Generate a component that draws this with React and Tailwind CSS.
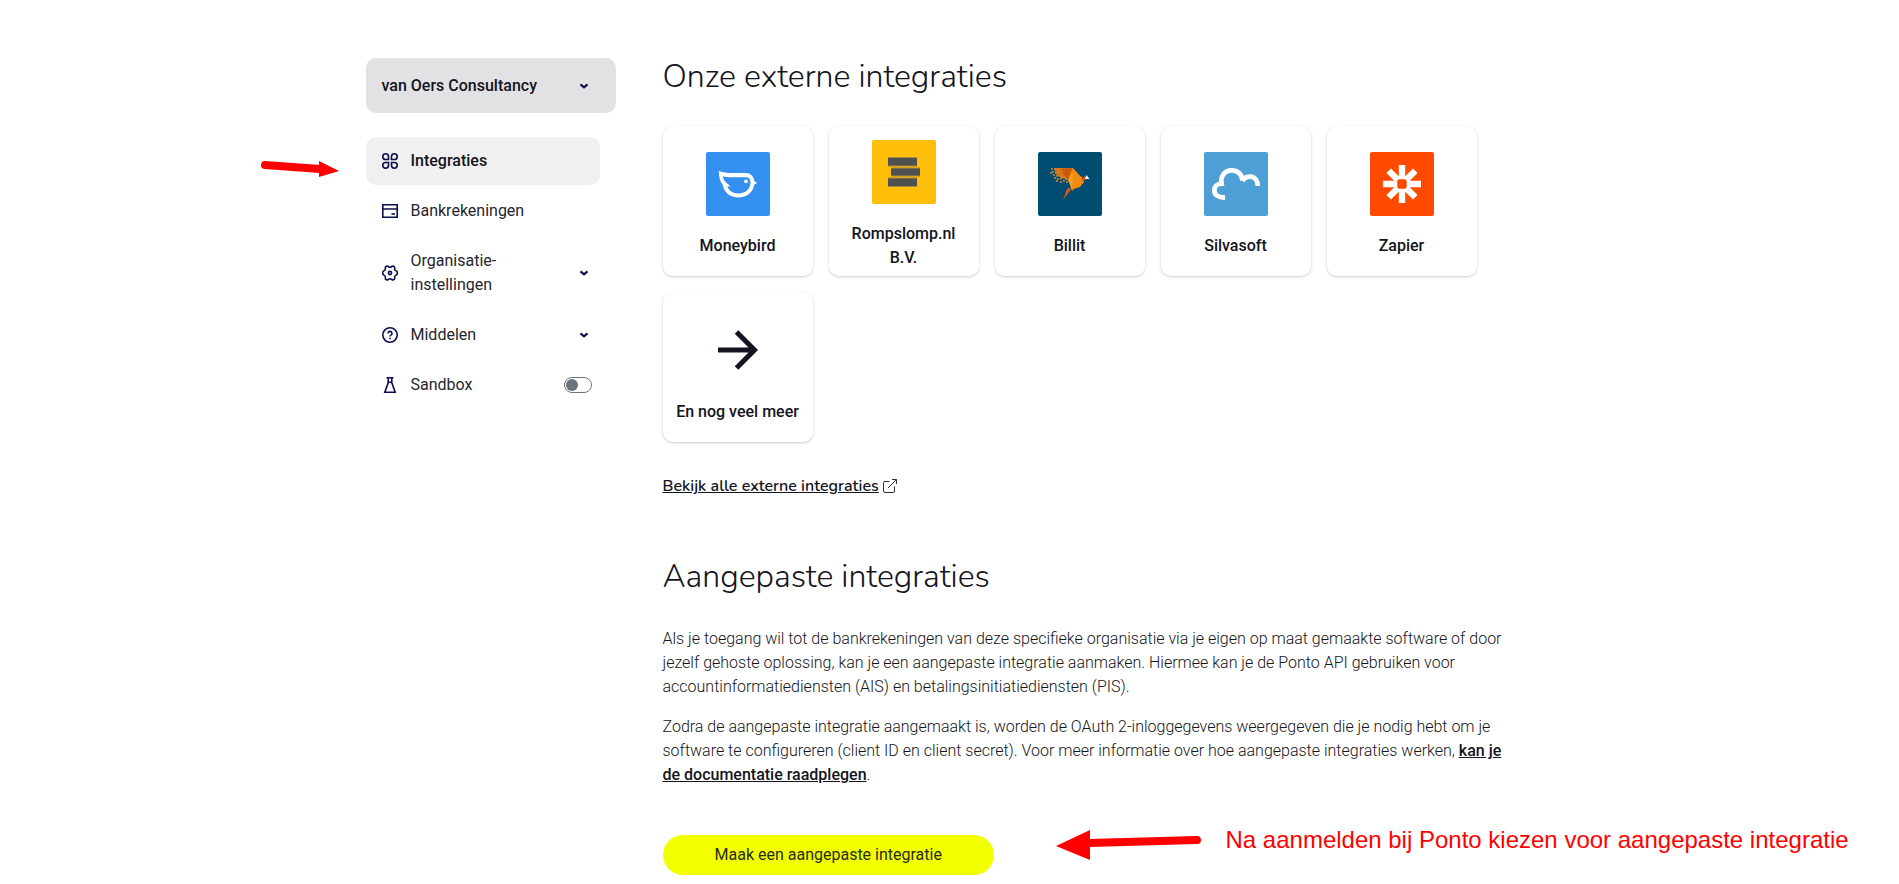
function Icon({ children, className = "size-4 shrink-0" }) {
  return (
    <svg viewBox="0 0 16 16" className={className} fill="none" stroke="#0b0f4c" strokeWidth="1.6" aria-hidden="true">
      {children}
    </svg>
  );
}

function Chevron() {
  return (
    <Icon className="mr-2 size-4 shrink-0">
      <path d="M4.500 6.400 8 9.400l3.500-3" strokeWidth="2.200" />
    </Icon>
  );
}

function IntegrationsIcon() {
  return (
    <Icon>
      <path d="M6.500 6.500H3.650A2.850 2.850 0 1 1 6.500 3.650ZM9.500 6.500V3.650A2.850 2.850 0 1 1 12.350 6.500ZM6.500 9.500V12.350A2.850 2.850 0 1 1 3.650 9.500ZM9.500 9.500H12.350A2.850 2.850 0 1 1 9.500 12.350Z" />
    </Icon>
  );
}

function AccountsIcon() {
  return (
    <Icon>
      <path d="M.8 1.800h14.400v12.400H.8ZM.8 6h14.400" />
      <path d="M9.500 11H13" />
    </Icon>
  );
}

function GearIcon() {
  return (
    <Icon>
      <path
        strokeLinejoin="round"
        d="M5 1C6 1 6.500 2.200 8 2.200S10 1 11 1l1.500.9c.5 1-.3 1.800.4 3 .6 1.100 1.800.9 2.300 1.900v2.400c-.5 1-1.700.8-2.300 1.900-.7 1.200.1 2-.4 3L11 15c-1 0-1.500-1.200-3-1.200S6 15 5 15l-1.500-.9c-.5-1 .3-1.800-.4-3C2.500 10 1.300 10.200.8 9.200V6.800c.5-1 1.700-.8 2.300-1.900.7-1.200-.1-2 .4-3Z"
      />
      <circle cx="8" cy="8" r="1.600" />
    </Icon>
  );
}

function HelpIcon() {
  return (
    <Icon>
      <circle cx="8" cy="8" r="7.200" />
      <path d="M6 6.400a2 2 0 1 1 3 1.700c-.7.400-1 .7-1 1.400M8 10.700v1.500" />
    </Icon>
  );
}

function FlaskIcon() {
  return (
    <Icon>
      <path d="M4.500.8h7M6.200 1v4.800L2.800 15.200h10.400L9.800 5.800V1M6.200 5.200h3.600" />
    </Icon>
  );
}

function MoneybirdLogo() {
  return (
    <svg viewBox="0 0 64 64" className="size-16 rounded-xs bg-[#338ff0]" aria-hidden="true">
      <path
        fillRule="evenodd"
        fill="#fff"
        d="M12.800 18.800C17 20.800 21 21 26 21H40c4.500 0 7.600 3 8.300 8L51.200 31l-3 1.800C47.300 40 41 45.600 32.500 45.600c-8.500 0-14.800-5.500-15.800-12.800C14 29.500 12.800 25 12.800 18.800ZM16.800 24.200c.3 2.600 1.300 4.400 3 6l4.900 4.200-3.300-.2C22.500 38.400 26.700 41.400 32.500 41.400 39.200 41.400 44.500 37 44.500 30.500 44.500 27 42.800 25.200 39.600 25.200H26c-3.500 0-6.400-.2-9.200-1Z"
      />
      <circle cx="40" cy="29.300" r="1.900" fill="#fff" />
    </svg>
  );
}

function RompslompLogo() {
  return (
    <svg viewBox="0 0 64 64" className="size-16 rounded-xs bg-[#ffbe0a]" aria-hidden="true">
      <path fill="#a5883a" d="M16 17h29v9.500H16zM19 27.500h29v9H19zM16 37.500h29V47H16z" />
      <path fill="#505052" d="M16 18h29v7.500H16zM19 28.500h29v7H19zM16 38.500h29V46H16z" />
    </svg>
  );
}

const pixels = [
  [13, 16], [16, 16], [19, 17], [14, 19], [17, 20], [20, 20], [12, 20], [15, 22], [18, 23],
  [21, 23], [16, 25], [19, 26], [22, 26], [24, 24], [25, 28], [22, 29], [18, 28], [28, 29], [27, 26], [23, 18],
];

function BillitLogo() {
  return (
    <svg viewBox="0 0 64 64" className="size-16 rounded-xs bg-[#004d73]" aria-hidden="true">
      <path fill="#e0730f" d="M16 16h19l3 6-5 8-5-3-5-1-5-4Z" />
      <path fill="#c95a0c" d="m23 17 11-1-4 11-4-4Z" />
      <path fill="#f08c12" d="m35 16 9 10-10 13-2-10Z" />
      <path fill="#f9a01b" d="m35 18-1 20-4-10Z" />
      <path fill="#f28a10" d="m43 24 3 6-4 5-9 3 4-6Z" />
      <path fill="#d9580f" d="m43 27 4-3 2 3-4 2ZM33 35l-1 4-7 9 4-11Z" />
      <path fill="#fff" d="m47 27 1.500-4 3 4Z" />
      {pixels.map(([x, y]) => (
        <rect key={x + "-" + y} x={x} y={y} width="1.800" height="1.800" fill="#c98434" />
      ))}
    </svg>
  );
}

function SilvasoftLogo() {
  return (
    <svg viewBox="0 0 64 64" className="size-16 rounded-xs bg-[#4f9fd7]" aria-hidden="true">
      <path
        fill="none"
        stroke="#fff"
        strokeWidth="4.800"
        d="M21 45.500C14 45.800 10.300 42.600 10.300 38.500c0-4 3-6.800 7.200-6.800C16.200 24.500 20.500 18.300 27.500 18.300c6 0 10 3.700 11.300 10.200M38.500 29c2-3.300 4.800-4.500 8-4.300 4.400.3 7.200 3.800 7.300 9.300"
      />
    </svg>
  );
}

function ZapierLogo() {
  return (
    <svg viewBox="0 0 64 64" className="size-16 rounded-xs bg-[#ff4a00]" aria-hidden="true">
      <path stroke="#fff" strokeWidth="6.400" d="M32 13v38M13 32h38M18.700 18.700l26.600 26.600M45.300 18.700 18.700 45.300" />
      <rect x="27.300" y="27.300" width="9.400" height="9.400" rx="2" fill="#ff4a00" />
    </svg>
  );
}

function ArrowLogo() {
  return (
    <svg viewBox="0 0 64 64" className="size-16" fill="none" stroke="#141420" strokeWidth="5" aria-hidden="true">
      <path d="M12 32h36M30.500 14 48.500 32l-18 18" />
    </svg>
  );
}

const integrations = [
  { name: "Moneybird", Logo: MoneybirdLogo },
  { name: "Rompslomp.nl B.V.", Logo: RompslompLogo },
  { name: "Billit", Logo: BillitLogo },
  { name: "Silvasoft", Logo: SilvasoftLogo },
  { name: "Zapier", Logo: ZapierLogo },
  { name: "En nog veel meer", Logo: ArrowLogo },
];

const itemClass = "flex w-full items-center gap-[13px] rounded-[10px] py-3 pl-4 text-left text-[#26262e]";

function Sidebar() {
  return (
    <aside className="w-[250px] shrink-0">
      <button type="button" className="flex h-[55px] w-full items-center justify-between rounded-[10px] bg-[#e2e2e4] px-4 font-medium">
        van Oers Consultancy
        <Chevron />
      </button>
      <nav className="relative mt-6 flex w-[234px] flex-col gap-[2px]">
        <a href="#integraties" aria-current="page" className="flex items-center gap-[13px] rounded-[10px] bg-[#f0f0f0] py-3 pl-4 font-medium">
          <IntegrationsIcon />
          Integraties
        </a>
        <a href="#bankrekeningen" className={itemClass}>
          <AccountsIcon />
          Bankrekeningen
        </a>
        <button type="button" aria-expanded="false" className={itemClass}>
          <GearIcon />
          <span className="grow">
            Organisatie-
            <br />
            instellingen
          </span>
          <Chevron />
        </button>
        <button type="button" aria-expanded="false" className={itemClass}>
          <HelpIcon />
          <span className="grow">Middelen</span>
          <Chevron />
        </button>
        <label className={itemClass}>
          <FlaskIcon />
          <span className="grow">Sandbox</span>
          <input
            type="checkbox"
            role="switch"
            className="mr-2 flex h-4 w-7 appearance-none items-center rounded-full border border-[#6c757d] bg-white pl-[1px] before:size-3 before:rounded-full before:bg-[#6c757d] checked:justify-end"
          />
        </label>
        <svg viewBox="0 0 80 18" className="absolute top-6 -left-[106px] h-[18px] w-20" aria-hidden="true">
          <path d="M5 4 60 8" stroke="#f00" strokeWidth="8" strokeLinecap="round" />
          <path d="M59 0v16l20-6Z" fill="#f00" />
        </svg>
      </nav>
    </aside>
  );
}

export default function App() {
  return (
    <div className="min-h-screen bg-white font-['Roboto',sans-serif] text-base text-[#141420]">
      <div className="mx-auto flex max-w-[1168px] gap-[47px] pt-[58px]">
        <Sidebar />
        <main className="max-w-[848px] grow">
          <h1 className="font-['Nunito','Lato',sans-serif] text-[32px] leading-[38px] font-[350]">
            Onze externe integraties
          </h1>
          <ul className="mt-[30px] flex flex-wrap gap-4">
            {integrations.map(({ name, Logo }) => (
              <li key={name}>
                <a
                  href="#integratie"
                  className="flex size-[150px] flex-col items-center justify-center gap-[18px] rounded-[10px] bg-white px-3 pt-2 text-center font-medium shadow-[0_1px_3px_rgba(0,0,0,0.2)]"
                >
                  <Logo />
                  {name}
                </a>
              </li>
            ))}
          </ul>
          <p className="mt-8 flex items-center gap-1">
            <a href="#alle-integraties" className="font-['Nunito','Open_Sans',sans-serif] text-base leading-6 font-semibold underline">
              Bekijk alle externe integraties
            </a>
            <svg viewBox="0 0 14 14" className="size-[14px]" fill="none" stroke="#333" aria-hidden="true">
              <path d="M6.500 2.500H2A1.500 1.500 0 0 0 .5 4v8A1.500 1.500 0 0 0 2 13.500h8a1.500 1.500 0 0 0 1.500-1.500V7.500M9 .5h4.500V5M13.500.5 5 9" />
            </svg>
          </p>

          <h2 className="mt-[60px] font-['Nunito','Lato',sans-serif] text-[32px] leading-[38px] font-[350]">
            Aangepaste integraties
          </h2>
          <p className="mt-[31px] font-light">
            Als je toegang wil tot de bankrekeningen van deze specifieke organisatie via je eigen op maat gemaakte
            software of door jezelf gehoste oplossing, kan je een aangepaste integratie aanmaken. Hiermee kan je de
            Ponto API gebruiken voor accountinformatiediensten (AIS) en betalingsinitiatiediensten (PIS).
          </p>
          <p className="mt-4 font-light">
            Zodra de aangepaste integratie aangemaakt is, worden de OAuth 2-inloggegevens weergegeven die je nodig
            hebt om je software te configureren (client ID en client secret). Voor meer informatie over hoe
            aangepaste integraties werken,{" "}
            <a href="#documentatie" className="font-medium underline">
              kan je de documentatie raadplegen
            </a>
            .
          </p>
          <div className="relative mt-12">
            <button type="button" className="h-10 rounded-full bg-[#f2ff00] px-13 text-[#2b2b1c]">
              Maak een aangepaste integratie
            </button>
            <div className="absolute -top-[5px] left-[393px] flex items-start gap-6 whitespace-nowrap text-[#f00]">
              <svg viewBox="0 0 146 30" className="h-[30px] w-[146px]" aria-hidden="true">
                <path d="M33 13 141 10" stroke="#f00" strokeWidth="8" strokeLinecap="round" />
                <path d="M34 0v30L0 16Z" fill="#f00" />
              </svg>
              <p className="font-['Liberation_Sans',sans-serif] text-2xl leading-5">
                Na aanmelden bij Ponto kiezen voor aangepaste integratie
              </p>
            </div>
          </div>
        </main>
      </div>
    </div>
  );
}
